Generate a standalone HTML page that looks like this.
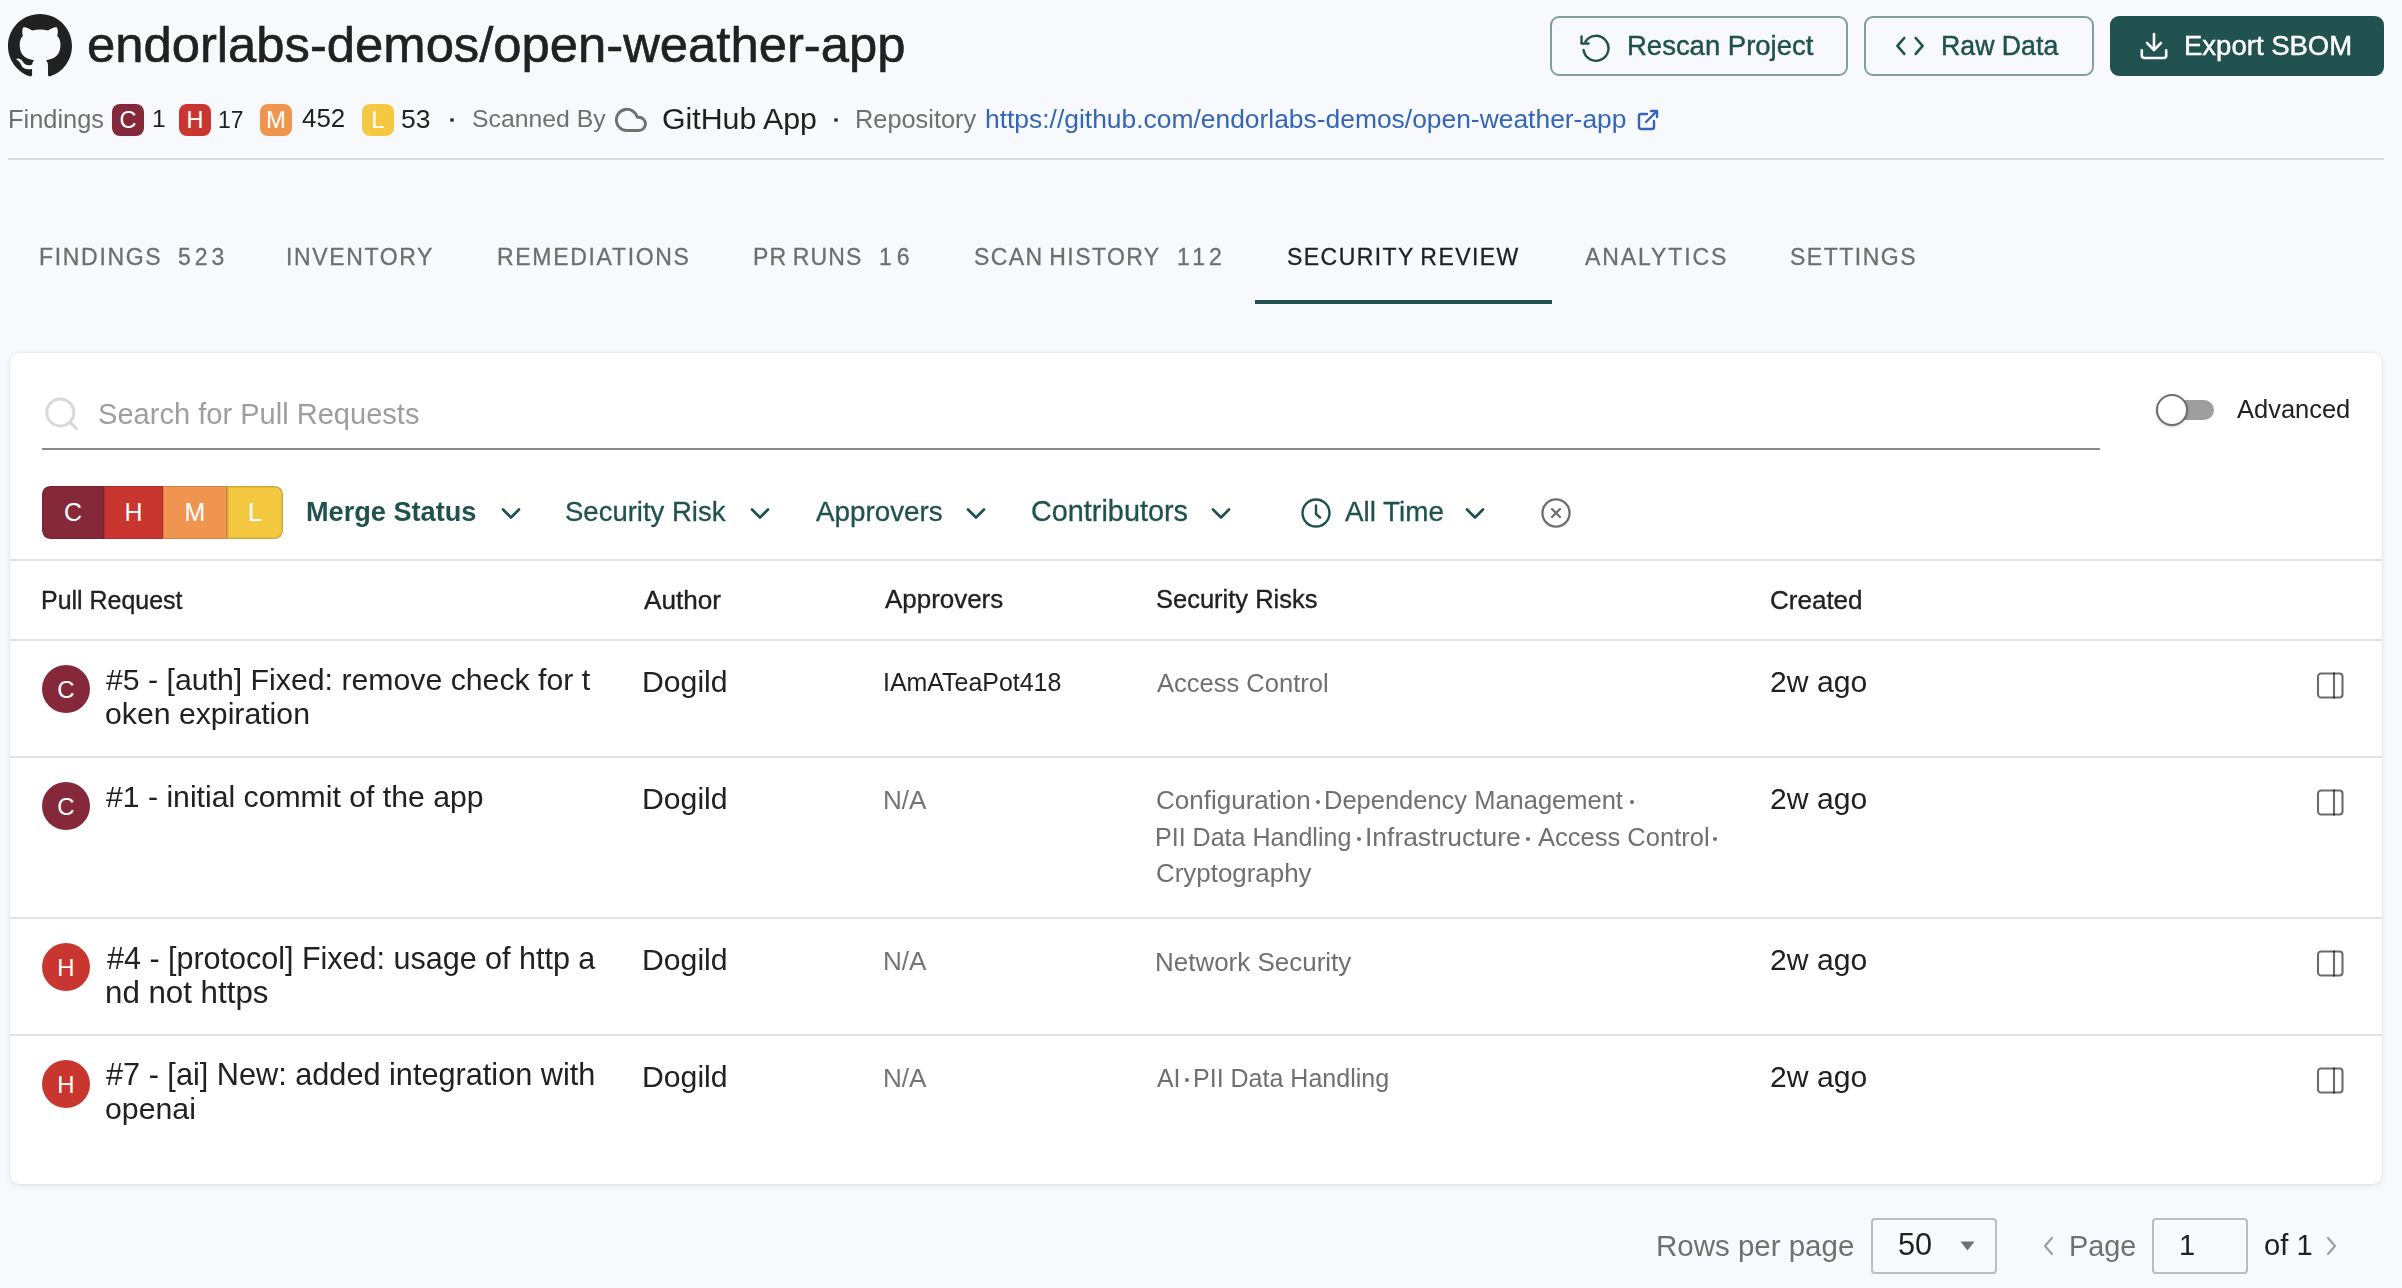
<!DOCTYPE html>
<html><head><meta charset="utf-8">
<style>
*{box-sizing:border-box;margin:0;padding:0}
html,body{width:2402px;height:1288px;overflow:hidden;background:#f8f9fc;font-family:"Liberation Sans",sans-serif;color:#212121}
.abs{position:absolute}
.t{position:absolute;white-space:nowrap;will-change:transform}
.btn{position:absolute;top:16px;height:60px;border:2px solid #809f9d;border-radius:9px}
.sev{position:absolute;top:104px;width:32px;height:32px;border-radius:8px;color:#fff;text-align:center;line-height:33px;font-size:23.5px}
.dot{position:absolute;width:4.2px;height:4.2px;border-radius:50%;background:#333}
.card{position:absolute;left:10px;top:353px;width:2372px;height:831px;background:#fff;border-radius:9px;box-shadow:0 0 0 1px rgba(0,0,0,0.035),0 2px 7px rgba(0,0,0,0.07)}
.hline{position:absolute;left:10px;width:2372px;height:2px;background:#e2e2e2}
.av{position:absolute;left:42px;width:48px;height:48px;border-radius:50%;color:#fff;font-size:24px;text-align:center;line-height:49px}
.rdot{position:absolute;width:4px;height:4px;border-radius:50%;background:#707070}
</style></head><body>

<!-- Header -->
<svg class="abs" style="left:8px;top:14px" width="64" height="64" viewBox="0 0 16 16"><path fill="#212121" d="M8 0C3.58 0 0 3.58 0 8c0 3.54 2.29 6.53 5.47 7.59.4.07.55-.17.55-.38 0-.19-.01-.82-.01-1.49-2.01.37-2.53-.49-2.69-.94-.09-.23-.48-.94-.82-1.13-.28-.15-.68-.52-.01-.53.63-.01 1.08.58 1.23.82.72 1.21 1.87.87 2.33.66.07-.52.28-.87.51-1.07-1.78-.2-3.64-.89-3.64-3.95 0-.87.31-1.59.82-2.15-.08-.2-.36-1.02.08-2.12 0 0 .67-.21 2.2.82.64-.18 1.32-.27 2-.27.68 0 1.36.09 2 .27 1.53-1.04 2.2-.82 2.2-.82.44 1.1.16 1.92.08 2.12.51.56.82 1.27.82 2.15 0 3.07-1.87 3.75-3.65 3.95.29.25.54.73.54 1.48 0 1.07-.01 1.93-.01 2.2 0 .21.15.46.55.38A8.013 8.013 0 0016 8c0-4.42-3.58-8-8-8z"/></svg>

<div class="btn" style="left:1550px;width:298px"></div>
<svg class="abs" style="left:1579px;top:32.5px" width="32" height="30" viewBox="0 0 32 30" fill="none" stroke="#1f524f" stroke-width="2.4" stroke-linecap="round" stroke-linejoin="round"><path d="M6.5 8.5A12.5 12.5 0 1 1 4.6 17"/><path d="M2.5 3.5v7h7"/></svg>
<div class="btn" style="left:1864px;width:230px"></div>
<svg class="abs" style="left:1893px;top:34px" width="34" height="24" viewBox="0 0 34 24" fill="none" stroke="#1f524f" stroke-width="2.6" stroke-linecap="round" stroke-linejoin="round"><path d="M11.3 4L4.4 11.95L11.3 19.9"/><path d="M22.7 4L29.6 11.95L22.7 19.9"/></svg>
<div class="btn" style="left:2110px;width:274px;background:#22524f;border-color:#22524f"></div>
<svg class="abs" style="left:2138px;top:31px" width="32" height="30" viewBox="0 0 32 30" fill="none" stroke="#fff" stroke-width="2.6" stroke-linecap="round" stroke-linejoin="round"><path d="M16 3v16"/><path d="M9 12l7 7 7-7"/><path d="M3.8 19.3v5.2a2.5 2.5 0 0 0 2.5 2.5h19.4a2.5 2.5 0 0 0 2.5-2.5v-5.2"/></svg>

<!-- Findings row -->
<div class="sev" style="left:112px;background:#84283a">C</div>
<div class="sev" style="left:179px;background:#c9352f">H</div>
<div class="sev" style="left:260px;background:#f0954f">M</div>
<div class="sev" style="left:362px;background:#f5c842">L</div>
<div class="dot" style="left:449.8px;top:117.9px"></div>
<svg class="abs" style="left:615px;top:104px" width="31.8" height="31.8" viewBox="0 0 24 24" fill="none" stroke="#707070" stroke-width="2.2" stroke-linecap="round" stroke-linejoin="round"><path d="M18 10h-1.26A8 8 0 1 0 9 20h9a5 5 0 0 0 0-10z"/></svg>
<div class="dot" style="left:834px;top:117.9px"></div>
<svg class="abs" style="left:1636px;top:108px" width="24" height="24" viewBox="0 0 24 24" fill="none" stroke="#3366b8" stroke-width="2.4" stroke-linecap="round" stroke-linejoin="round"><path d="M18 13v6a2 2 0 0 1-2 2H5a2 2 0 0 1-2-2V8a2 2 0 0 1 2-2h6"/><path d="M15 3h6v6"/><path d="M10 14L21 3"/></svg>

<div class="abs" style="left:8px;top:158px;width:2376px;height:2px;background:#dadada"></div>

<!-- Tabs underline -->
<div class="abs" style="left:1255px;top:300px;width:297px;height:4px;background:#22524f"></div>

<!-- Card -->
<div class="card"></div>
<svg class="abs" style="left:40px;top:392px" width="40" height="40" viewBox="0 0 40 40" fill="none" stroke="#d9d9d9" stroke-width="3"><circle cx="20.3" cy="20.4" r="13.5"/><path d="M29.8 29.9L36.3 36.5" stroke-linecap="round"/></svg>
<div class="abs" style="left:42px;top:448px;width:2058px;height:2px;background:#8a8a8a"></div>

<!-- toggle -->
<div class="abs" style="left:2156px;top:400px;width:58px;height:20px;border-radius:10px;background:#9e9e9e"></div>
<div class="abs" style="left:2156px;top:394px;width:32px;height:32px;border-radius:50%;background:#fff;border:2px solid #6e6e6e;box-shadow:0 1px 3px rgba(0,0,0,0.2)"></div>

<!-- severity filter -->
<div class="abs" style="left:42px;top:486px;width:241px;height:53px;border-radius:8px;overflow:hidden;font-size:25px;color:#fff">
  <div class="abs" style="left:0;top:0;width:62px;height:53px;background:#84283a;text-align:center;line-height:52px;box-shadow:inset 0 0 0 1px rgba(0,0,0,0.12);border-radius:8px 0 0 8px">C</div>
  <div class="abs" style="left:62px;top:0;width:59px;height:53px;background:#c9352f;text-align:center;line-height:52px;box-shadow:inset 0 0 0 1px rgba(0,0,0,0.12)">H</div>
  <div class="abs" style="left:121px;top:0;width:64px;height:53px;background:#f0954f;text-align:center;line-height:52px;box-shadow:inset 0 0 0 1px rgba(0,0,0,0.12)">M</div>
  <div class="abs" style="left:185px;top:0;width:56px;height:53px;background:#f5c842;text-align:center;line-height:52px;box-shadow:inset 0 0 0 1.5px rgba(0,0,0,0.15);border-radius:0 8px 8px 0">L</div>
</div>

<svg class="abs" style="left:501px;top:506.5px" width="20" height="14" viewBox="0 0 20 14" fill="none" stroke="#1f524f" stroke-width="2.7" stroke-linecap="round" stroke-linejoin="round"><path d="M2 2.5l8 8 8-8"/></svg>
<svg class="abs" style="left:750px;top:506.5px" width="20" height="14" viewBox="0 0 20 14" fill="none" stroke="#1f524f" stroke-width="2.7" stroke-linecap="round" stroke-linejoin="round"><path d="M2 2.5l8 8 8-8"/></svg>
<svg class="abs" style="left:966px;top:506.5px" width="20" height="14" viewBox="0 0 20 14" fill="none" stroke="#1f524f" stroke-width="2.7" stroke-linecap="round" stroke-linejoin="round"><path d="M2 2.5l8 8 8-8"/></svg>
<svg class="abs" style="left:1211px;top:506.5px" width="20" height="14" viewBox="0 0 20 14" fill="none" stroke="#1f524f" stroke-width="2.7" stroke-linecap="round" stroke-linejoin="round"><path d="M2 2.5l8 8 8-8"/></svg>
<svg class="abs" style="left:1465px;top:506.5px" width="20" height="14" viewBox="0 0 20 14" fill="none" stroke="#1f524f" stroke-width="2.7" stroke-linecap="round" stroke-linejoin="round"><path d="M2 2.5l8 8 8-8"/></svg>
<svg class="abs" style="left:1300px;top:497px" width="32" height="32" viewBox="0 0 32 32" fill="none" stroke="#1f524f" stroke-width="2.4" stroke-linecap="round" stroke-linejoin="round"><circle cx="16" cy="16" r="13.5"/><path d="M16 8.5v8.5l4.2 3.6"/></svg>
<svg class="abs" style="left:1540px;top:497px" width="32" height="32" viewBox="0 0 32 32" fill="none" stroke="#000" stroke-opacity="0.57" stroke-width="2.3" stroke-linecap="round"><circle cx="16" cy="16" r="13.6"/><path d="M12 12l8 8M20 12l-8 8"/></svg>

<div class="hline" style="top:559px"></div>
<div class="hline" style="top:639px"></div>

<div class="av" style="top:665px;background:#84283a">C</div>
<svg class="abs" style="left:2316px;top:672px" width="28" height="27" viewBox="0 0 28 27" fill="none" stroke="#000" stroke-opacity="0.58" stroke-width="2.1"><rect x="2" y="1.5" width="24.5" height="24" rx="3"/><path d="M18 0.5v26"/></svg>
<div class="hline" style="top:756px"></div>

<div class="av" style="top:782px;background:#84283a">C</div>
<svg class="abs" style="left:2316px;top:789px" width="28" height="27" viewBox="0 0 28 27" fill="none" stroke="#000" stroke-opacity="0.58" stroke-width="2.1"><rect x="2" y="1.5" width="24.5" height="24" rx="3"/><path d="M18 0.5v26"/></svg>
<div class="rdot" style="left:1316px;top:800px"></div>
<div class="rdot" style="left:1630px;top:800px"></div>
<div class="rdot" style="left:1357px;top:837px"></div>
<div class="rdot" style="left:1526px;top:837px"></div>
<div class="rdot" style="left:1713px;top:837px"></div>
<div class="hline" style="top:917px"></div>

<div class="av" style="top:943px;background:#c9352f">H</div>
<svg class="abs" style="left:2316px;top:950px" width="28" height="27" viewBox="0 0 28 27" fill="none" stroke="#000" stroke-opacity="0.58" stroke-width="2.1"><rect x="2" y="1.5" width="24.5" height="24" rx="3"/><path d="M18 0.5v26"/></svg>
<div class="hline" style="top:1034px"></div>

<div class="av" style="top:1060px;background:#c9352f">H</div>
<svg class="abs" style="left:2316px;top:1067px" width="28" height="27" viewBox="0 0 28 27" fill="none" stroke="#000" stroke-opacity="0.58" stroke-width="2.1"><rect x="2" y="1.5" width="24.5" height="24" rx="3"/><path d="M18 0.5v26"/></svg>
<div class="rdot" style="left:1185px;top:1078px"></div>

<!-- pagination -->
<div class="abs" style="left:1871px;top:1218px;width:126px;height:56px;border:2px solid #bdbdbd;border-radius:4px"></div>
<svg class="abs" style="left:1960px;top:1241px" width="15" height="10" viewBox="0 0 15 10"><path d="M0.5 0.5h14L7.5 9.5z" fill="#707070"/></svg>
<svg class="abs" style="left:2040px;top:1234px" width="16" height="24" viewBox="0 0 16 24" fill="none" stroke="#9e9e9e" stroke-width="2.2" stroke-linecap="round" stroke-linejoin="round"><path d="M12 4l-7 8 7 8"/></svg>
<div class="abs" style="left:2152px;top:1218px;width:96px;height:56px;border:2px solid #bdbdbd;border-radius:4px"></div>
<svg class="abs" style="left:2324px;top:1234px" width="16" height="24" viewBox="0 0 16 24" fill="none" stroke="#9e9e9e" stroke-width="2.2" stroke-linecap="round" stroke-linejoin="round"><path d="M4 4l7 8-7 8"/></svg>

<span id="title" class="t" style="left:87.20px;top:20.02px;font-size:50.77px;line-height:50.77px;color:#212121;-webkit-text-stroke:0.6px #212121;">endorlabs-demos/open-weather-app</span>
<span id="b_rescan" class="t" style="left:1626.60px;top:32.23px;font-size:27.49px;line-height:27.49px;color:#1f524f;-webkit-text-stroke:0.45px #1f524f;">Rescan Project</span>
<span id="b_raw" class="t" style="left:1940.60px;top:32.89px;font-size:26.71px;line-height:26.71px;color:#1f524f;-webkit-text-stroke:0.45px #1f524f;">Raw Data</span>
<span id="b_export" class="t" style="left:2184.40px;top:32.20px;font-size:27.52px;line-height:27.52px;color:#ffffff;-webkit-text-stroke:0.45px #ffffff;">Export SBOM</span>
<span id="f_findings" class="t" style="left:7.60px;top:106.50px;font-size:25.40px;line-height:25.40px;color:#707070;">Findings</span>
<span id="f_1" class="t" style="left:152.00px;top:107.26px;font-size:24.50px;line-height:24.50px;color:#212121;">1</span>
<span id="f_17" class="t" style="left:218.00px;top:108.54px;font-size:22.99px;line-height:22.99px;color:#212121;">17</span>
<span id="f_452" class="t" style="left:301.80px;top:106.08px;font-size:25.90px;line-height:25.90px;color:#212121;">452</span>
<span id="f_53" class="t" style="left:401.00px;top:105.60px;font-size:26.46px;line-height:26.46px;color:#212121;">53</span>
<span id="f_scanned" class="t" style="left:471.80px;top:107.03px;font-size:24.77px;line-height:24.77px;color:#707070;">Scanned By</span>
<span id="f_ghapp" class="t" style="left:662.00px;top:103.65px;font-size:30.30px;line-height:30.30px;color:#212121;">GitHub App</span>
<span id="f_repo" class="t" style="left:855.00px;top:106.54px;font-size:25.35px;line-height:25.35px;color:#707070;">Repository</span>
<span id="f_link" class="t" style="left:985.40px;top:105.64px;font-size:26.42px;line-height:26.42px;color:#3366b8;">https://github.com/endorlabs-demos/open-weather-app</span>
<span id="tab_findings" class="t" style="left:39.20px;top:245.83px;font-size:23.00px;line-height:23.00px;color:#6e6e6e;letter-spacing:1.68px;-webkit-text-stroke:0.3px #6e6e6e;">FINDINGS</span>
<span id="tab_523" class="t" style="left:177.60px;top:245.83px;font-size:23.00px;line-height:23.00px;color:#6e6e6e;letter-spacing:3.92px;-webkit-text-stroke:0.3px #6e6e6e;">523</span>
<span id="tab_inv" class="t" style="left:286.00px;top:245.83px;font-size:23.00px;line-height:23.00px;color:#6e6e6e;letter-spacing:1.62px;-webkit-text-stroke:0.3px #6e6e6e;">INVENTORY</span>
<span id="tab_rem" class="t" style="left:497.40px;top:245.83px;font-size:23.00px;line-height:23.00px;color:#6e6e6e;letter-spacing:1.69px;-webkit-text-stroke:0.3px #6e6e6e;">REMEDIATIONS</span>
<span id="tab_pr" class="t" style="left:753.40px;top:245.83px;font-size:23.00px;line-height:23.00px;color:#6e6e6e;letter-spacing:1.15px;word-spacing:-2px;-webkit-text-stroke:0.3px #6e6e6e;">PR RUNS</span>
<span id="tab_16" class="t" style="left:879.00px;top:245.83px;font-size:23.00px;line-height:23.00px;color:#6e6e6e;letter-spacing:4.87px;-webkit-text-stroke:0.3px #6e6e6e;">16</span>
<span id="tab_scan" class="t" style="left:974.00px;top:245.83px;font-size:23.00px;line-height:23.00px;color:#6e6e6e;letter-spacing:1.41px;word-spacing:-2px;-webkit-text-stroke:0.3px #6e6e6e;">SCAN HISTORY</span>
<span id="tab_112" class="t" style="left:1177.00px;top:245.83px;font-size:23.00px;line-height:23.00px;color:#6e6e6e;letter-spacing:4.06px;-webkit-text-stroke:0.3px #6e6e6e;">112</span>
<span id="tab_sec" class="t" style="left:1287.00px;top:245.83px;font-size:23.00px;line-height:23.00px;color:#212121;letter-spacing:1.45px;word-spacing:-2px;-webkit-text-stroke:0.3px #212121;">SECURITY REVIEW</span>
<span id="tab_ana" class="t" style="left:1585.20px;top:245.83px;font-size:23.00px;line-height:23.00px;color:#6e6e6e;letter-spacing:1.91px;-webkit-text-stroke:0.3px #6e6e6e;">ANALYTICS</span>
<span id="tab_set" class="t" style="left:1790.00px;top:245.83px;font-size:23.00px;line-height:23.00px;color:#6e6e6e;letter-spacing:1.51px;-webkit-text-stroke:0.3px #6e6e6e;">SETTINGS</span>
<span id="search" class="t" style="left:98.00px;top:400.39px;font-size:29.07px;line-height:29.07px;color:#9e9e9e;">Search for Pull Requests</span>
<span id="advanced" class="t" style="left:2236.60px;top:396.73px;font-size:25.48px;line-height:25.48px;color:#212121;">Advanced</span>
<span id="fl_merge" class="t" style="left:306.00px;top:497.72px;font-size:27.14px;line-height:27.14px;color:#1f524f;font-weight:700;">Merge Status</span>
<span id="fl_sec" class="t" style="left:565.00px;top:497.92px;font-size:27.50px;line-height:27.50px;color:#1f524f;-webkit-text-stroke:0.3px #1f524f;">Security Risk</span>
<span id="fl_appr" class="t" style="left:815.60px;top:497.68px;font-size:27.79px;line-height:27.79px;color:#1f524f;-webkit-text-stroke:0.3px #1f524f;">Approvers</span>
<span id="fl_contr" class="t" style="left:1030.60px;top:496.80px;font-size:28.82px;line-height:28.82px;color:#1f524f;-webkit-text-stroke:0.3px #1f524f;">Contributors</span>
<span id="fl_time" class="t" style="left:1344.60px;top:497.67px;font-size:27.80px;line-height:27.80px;color:#1f524f;-webkit-text-stroke:0.3px #1f524f;">All Time</span>
<span id="th_pr" class="t" style="left:41.20px;top:587.58px;font-size:24.95px;line-height:24.95px;color:#212121;-webkit-text-stroke:0.35px #212121;">Pull Request</span>
<span id="th_author" class="t" style="left:644.00px;top:586.57px;font-size:26.14px;line-height:26.14px;color:#212121;-webkit-text-stroke:0.35px #212121;">Author</span>
<span id="th_appr" class="t" style="left:884.60px;top:586.74px;font-size:25.95px;line-height:25.95px;color:#212121;-webkit-text-stroke:0.35px #212121;">Approvers</span>
<span id="th_risks" class="t" style="left:1156.00px;top:587.12px;font-size:25.49px;line-height:25.49px;color:#212121;-webkit-text-stroke:0.35px #212121;">Security Risks</span>
<span id="th_created" class="t" style="left:1769.80px;top:586.68px;font-size:26.02px;line-height:26.02px;color:#212121;-webkit-text-stroke:0.35px #212121;">Created</span>
<span id="r1_l1" class="t" style="left:106.00px;top:665.39px;font-size:30.25px;line-height:30.25px;color:#212121;">#5 - [auth] Fixed: remove check for t</span>
<span id="r1_l2" class="t" style="left:105.00px;top:699.42px;font-size:30.22px;line-height:30.22px;color:#212121;">oken expiration</span>
<span id="r1_auth" class="t" style="left:642.00px;top:666.85px;font-size:30.19px;line-height:30.19px;color:#212121;">Dogild</span>
<span id="r1_appr" class="t" style="left:883.00px;top:670.48px;font-size:24.95px;line-height:24.95px;color:#212121;">IAmATeaPot418</span>
<span id="r1_risk" class="t" style="left:1157.40px;top:670.90px;font-size:25.52px;line-height:25.52px;color:#707070;">Access Control</span>
<span id="r1_created" class="t" style="left:1770.00px;top:666.89px;font-size:30.14px;line-height:30.14px;color:#212121;">2w ago</span>
<span id="r2_l1" class="t" style="left:106.00px;top:782.43px;font-size:30.20px;line-height:30.20px;color:#212121;">#1 - initial commit of the app</span>
<span id="r2_auth" class="t" style="left:642.00px;top:783.85px;font-size:30.19px;line-height:30.19px;color:#212121;">Dogild</span>
<span id="r2_appr" class="t" style="left:882.60px;top:786.50px;font-size:26.10px;line-height:26.10px;color:#757575;">N/A</span>
<span id="r2_rk1" class="t" style="left:1156.40px;top:787.47px;font-size:26.03px;line-height:26.03px;color:#707070;">Configuration</span>
<span id="r2_rk2" class="t" style="left:1324.00px;top:787.92px;font-size:25.49px;line-height:25.49px;color:#707070;">Dependency Management</span>
<span id="r2_rk3" class="t" style="left:1155.40px;top:825.08px;font-size:25.06px;line-height:25.06px;color:#707070;">PII Data Handling</span>
<span id="r2_rk4" class="t" style="left:1364.80px;top:823.93px;font-size:26.43px;line-height:26.43px;color:#707070;">Infrastructure</span>
<span id="r2_rk5" class="t" style="left:1537.60px;top:824.70px;font-size:25.52px;line-height:25.52px;color:#707070;">Access Control</span>
<span id="r2_rk6" class="t" style="left:1156.40px;top:860.76px;font-size:25.92px;line-height:25.92px;color:#707070;">Cryptography</span>
<span id="r2_created" class="t" style="left:1770.00px;top:783.89px;font-size:30.14px;line-height:30.14px;color:#212121;">2w ago</span>
<span id="r3_l1" class="t" style="left:106.60px;top:943.18px;font-size:30.50px;line-height:30.50px;color:#212121;">#4 - [protocol] Fixed: usage of http a</span>
<span id="r3_l2" class="t" style="left:104.60px;top:976.53px;font-size:31.27px;line-height:31.27px;color:#212121;">nd not https</span>
<span id="r3_auth" class="t" style="left:642.00px;top:944.85px;font-size:30.19px;line-height:30.19px;color:#212121;">Dogild</span>
<span id="r3_appr" class="t" style="left:882.60px;top:947.50px;font-size:26.10px;line-height:26.10px;color:#757575;">N/A</span>
<span id="r3_risk" class="t" style="left:1155.40px;top:948.51px;font-size:25.98px;line-height:25.98px;color:#707070;">Network Security</span>
<span id="r3_created" class="t" style="left:1770.00px;top:944.89px;font-size:30.14px;line-height:30.14px;color:#212121;">2w ago</span>
<span id="r4_l1" class="t" style="left:106.00px;top:1060.03px;font-size:30.68px;line-height:30.68px;color:#212121;">#7 - [ai] New: added integration with</span>
<span id="r4_l2" class="t" style="left:105.00px;top:1094.37px;font-size:30.27px;line-height:30.27px;color:#212121;">openai</span>
<span id="r4_auth" class="t" style="left:642.00px;top:1061.85px;font-size:30.19px;line-height:30.19px;color:#212121;">Dogild</span>
<span id="r4_appr" class="t" style="left:882.60px;top:1064.50px;font-size:26.10px;line-height:26.10px;color:#757575;">N/A</span>
<span id="r4_rk1" class="t" style="left:1157.40px;top:1066.42px;font-size:24.90px;line-height:24.90px;color:#707070;">AI</span>
<span id="r4_rk2" class="t" style="left:1193.00px;top:1066.32px;font-size:25.02px;line-height:25.02px;color:#707070;">PII Data Handling</span>
<span id="r4_created" class="t" style="left:1770.00px;top:1061.89px;font-size:30.14px;line-height:30.14px;color:#212121;">2w ago</span>
<span id="pg_rows" class="t" style="left:1656.20px;top:1231.03px;font-size:29.49px;line-height:29.49px;color:#707070;">Rows per page</span>
<span id="pg_50" class="t" style="left:1898.40px;top:1230.03px;font-size:30.68px;line-height:30.68px;color:#212121;">50</span>
<span id="pg_page" class="t" style="left:2069.00px;top:1231.60px;font-size:28.83px;line-height:28.83px;color:#707070;">Page</span>
<span id="pg_1" class="t" style="left:2179.00px;top:1231.45px;font-size:29.00px;line-height:29.00px;color:#212121;">1</span>
<span id="pg_of" class="t" style="left:2264.20px;top:1231.34px;font-size:29.13px;line-height:29.13px;color:#212121;">of 1</span>

</body></html>
